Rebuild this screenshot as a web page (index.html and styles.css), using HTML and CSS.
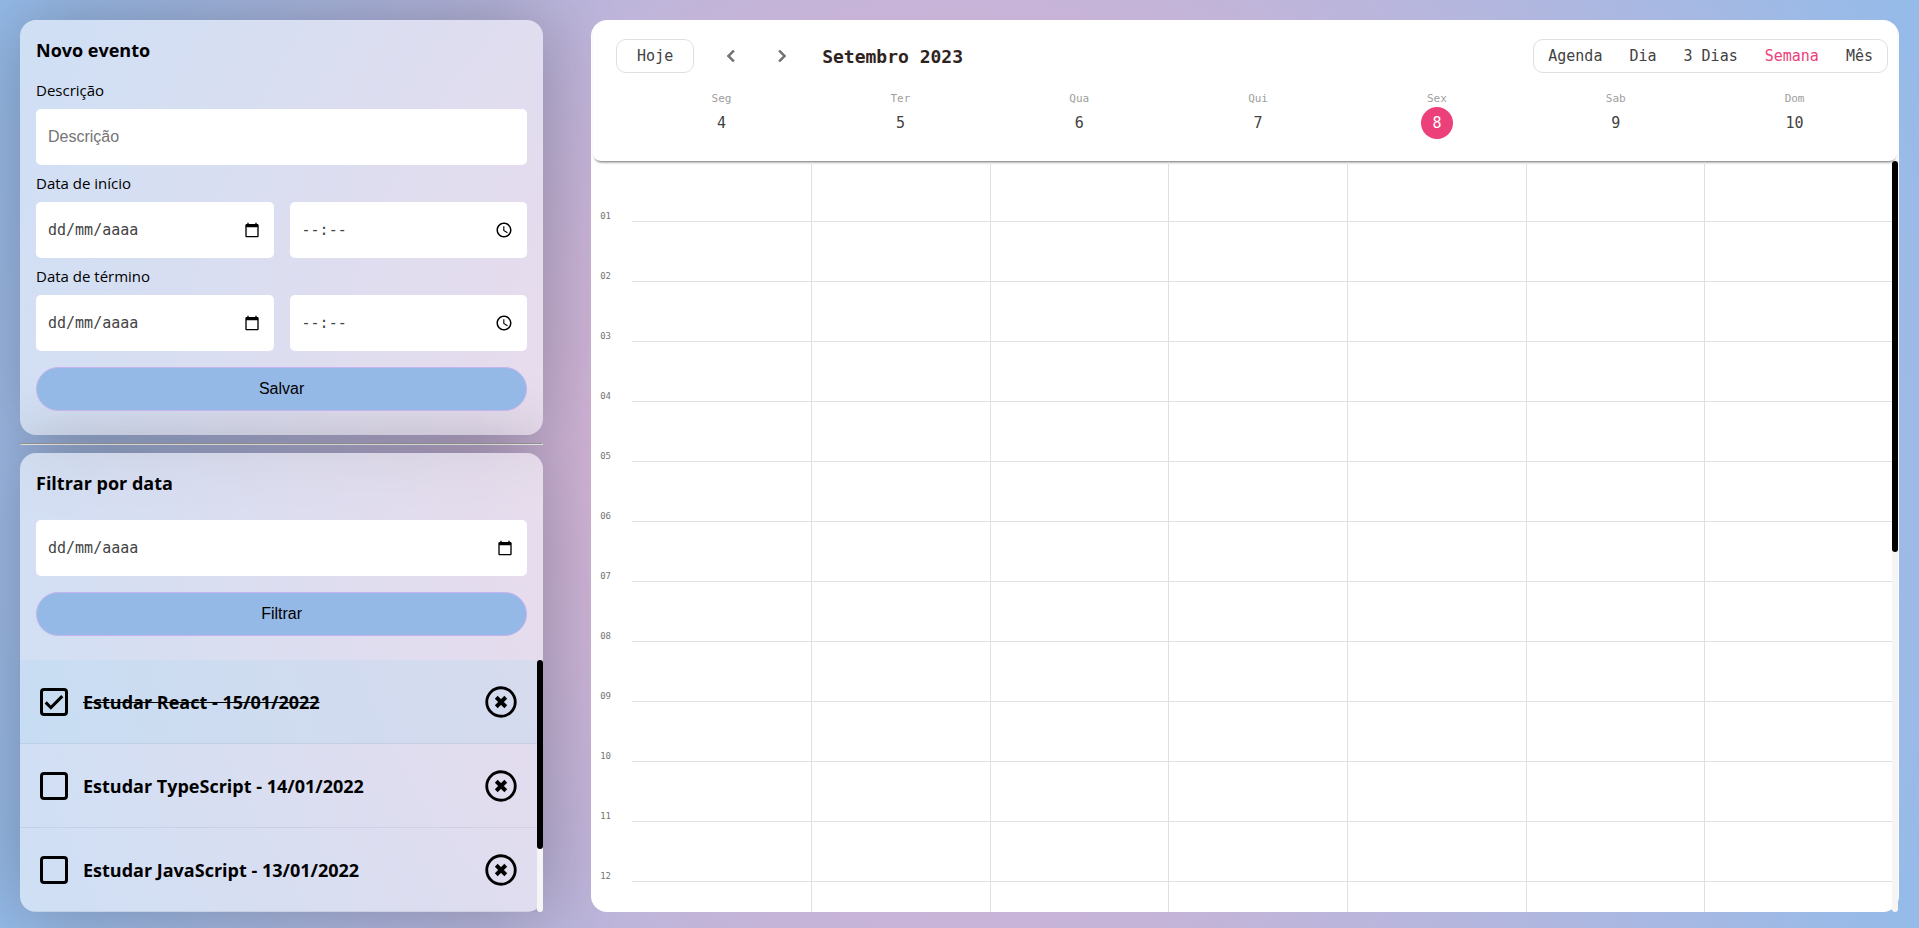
FILE: index.html
```html
<!DOCTYPE html>
<html lang="pt-BR">
<head>
<meta charset="utf-8">
<meta name="viewport" content="width=device-width, initial-scale=1">
<title>Calendário de eventos</title>
<link rel="stylesheet" href="styles.css">
</head>
<body>
<svg class="sprite" aria-hidden="true">
  <symbol id="i-date" viewBox="0 0 24 24"><path d="M20 3h-1V1h-2v2H7V1H5v2H4c-1.100 0-2 .9-2 2v16c0 1.100.9 2 2 2h16c1.100 0 2-.9 2-2V5c0-1.100-.9-2-2-2zm0 18H4V8h16v13z"/></symbol>
  <symbol id="i-time" viewBox="0 0 24 24"><path d="M12 2C6.500 2 2 6.500 2 12s4.500 10 10 10 10-4.500 10-10S17.500 2 12 2zm0 18c-4.400 0-8-3.600-8-8s3.600-8 8-8 8 3.600 8 8-3.600 8-8 8zm.5-13H11v6l5.200 3.200.8-1.300-4.500-2.700V7z"/></symbol>
  <symbol id="i-close" viewBox="0 0 24 24"><circle cx="12" cy="12" r="9" fill="none" stroke="currentColor" stroke-width="1.8"/><path d="M9 9l6 6M15 9l-6 6" stroke="currentColor" stroke-width="2.500"/></symbol>
  <symbol id="i-prev" viewBox="0 0 24 24"><path stroke="currentColor" stroke-width=".7" d="M15.410 7.410 14 6l-6 6 6 6 1.410-1.410L10.830 12z"/></symbol>
  <symbol id="i-next" viewBox="0 0 24 24"><path stroke="currentColor" stroke-width=".7" d="M10 6 8.590 7.410 13.170 12l-4.580 4.590L10 18l6-6z"/></symbol>
</svg>
<div class="layout">
  <aside class="sidebar">
    <section class="panel">
      <form class="form">
        <h3 class="title">Novo evento</h3>
        <label class="label" for="desc">Descrição</label>
        <div class="field"><input id="desc" class="input input-text" type="text" placeholder="Descrição"></div>
        <label class="label" for="start-date">Data de início</label>
        <div class="pair">
          <div class="field"><input id="start-date" class="input" type="text" placeholder="dd/mm/aaaa"><button class="picker" type="button" aria-label="Abrir calendário"><svg><use href="#i-date"/></svg></button></div>
          <div class="field"><input class="input" type="text" placeholder="--:--" aria-label="Hora de início"><button class="picker picker-time" type="button" aria-label="Abrir horário"><svg><use href="#i-time"/></svg></button></div>
        </div>
        <label class="label" for="end-date">Data de término</label>
        <div class="pair">
          <div class="field"><input id="end-date" class="input" type="text" placeholder="dd/mm/aaaa"><button class="picker" type="button" aria-label="Abrir calendário"><svg><use href="#i-date"/></svg></button></div>
          <div class="field"><input class="input" type="text" placeholder="--:--" aria-label="Hora de término"><button class="picker picker-time" type="button" aria-label="Abrir horário"><svg><use href="#i-time"/></svg></button></div>
        </div>
        <button class="submit" type="button">Salvar</button>
      </form>
    </section>
    <hr class="divider">
    <section class="panel events">
      <form class="form form-filter">
        <h3 class="title">Filtrar por data</h3>
        <div class="field"><input class="input" type="text" placeholder="dd/mm/aaaa" aria-label="Filtrar por data"><button class="picker" type="button" aria-label="Abrir calendário"><svg><use href="#i-date"/></svg></button></div>
        <button class="submit" type="button">Filtrar</button>
      </form>
      <div class="scroll">
        <ul class="list">
          <li class="item item-done"><input class="check" id="e1" type="checkbox" checked><label class="name" for="e1">Estudar React - 15/01/2022</label><button class="remove" type="button" aria-label="Remover"><svg><use href="#i-close"/></svg></button></li>
          <li class="item"><input class="check" id="e2" type="checkbox"><label class="name" for="e2">Estudar TypeScript - 14/01/2022</label><button class="remove" type="button" aria-label="Remover"><svg><use href="#i-close"/></svg></button></li>
          <li class="item"><input class="check" id="e3" type="checkbox"><label class="name" for="e3">Estudar JavaScript - 13/01/2022</label><button class="remove" type="button" aria-label="Remover"><svg><use href="#i-close"/></svg></button></li>
        </ul>
        <div class="track"><div class="thumb thumb-list"></div></div>
      </div>
    </section>
  </aside>
  <main class="calendar">
    <header class="head">
      <div class="toolbar">
        <button class="today" type="button">Hoje</button>
        <button class="arrow" type="button" aria-label="Anterior"><svg><use href="#i-prev"/></svg></button>
        <button class="arrow" type="button" aria-label="Próximo"><svg><use href="#i-next"/></svg></button>
        <h2 class="month">Setembro 2023</h2>
        <nav class="views">
          <button class="view" type="button">Agenda</button>
          <button class="view" type="button">Dia</button>
          <button class="view" type="button">3 Dias</button>
          <button class="view view-active" type="button">Semana</button>
          <button class="view" type="button">Mês</button>
        </nav>
      </div>
      <div class="days">
        <div class="day"><span class="weekday">Seg</span><span class="number">4</span></div>
        <div class="day"><span class="weekday">Ter</span><span class="number">5</span></div>
        <div class="day"><span class="weekday">Qua</span><span class="number">6</span></div>
        <div class="day"><span class="weekday">Qui</span><span class="number">7</span></div>
        <div class="day"><span class="weekday">Sex</span><span class="number number-today">8</span></div>
        <div class="day"><span class="weekday">Sab</span><span class="number">9</span></div>
        <div class="day"><span class="weekday">Dom</span><span class="number">10</span></div>
      </div>
    </header>
    <div class="scroll scroll-hours">
      <div class="hours" id="hours"></div>
      <div class="track"><div class="thumb thumb-hours"></div></div>
    </div>
  </main>
</div>
<script src="script.js"></script>
</body>
</html>
```

FILE: styles.css
```css
* { box-sizing: border-box; }

body {
  margin: 0;
  height: 100vh;
  overflow: hidden;
  font-family: "Open Sans", "Noto Sans", sans-serif;
  color: #000;
  background: radial-gradient(circle, #eeaeca 0%, #94bbe9 100%);
}

h2, h3, ul { margin: 0; padding: 0; }
button { cursor: pointer; padding: 0; border: 0; background: none; color: inherit; }
svg { display: block; fill: currentColor; }
.sprite { display: none; }

.layout {
  display: grid;
  grid-template-columns: minmax(0, 2fr) minmax(0, 5fr);
  gap: 48px;
  height: 100vh;
  padding: 20px 20px 16px;
}

.sidebar { display: flex; flex-direction: column; min-height: 0; }

.panel {
  border-radius: 16px;
  background: rgba(255, 255, 255, 0.54);
  box-shadow: 0 0 80px rgba(0, 0, 0, 0.28);
}
.form {
  position: relative;
  z-index: 1;
  display: flex;
  flex-direction: column;
  padding: 16px 16px 24px;
}

.title { margin-bottom: 16px; font-size: 18px; line-height: 28px; font-weight: 700; }
.form-filter .title { margin-bottom: 23px; }
.label { margin-bottom: 8px; font-size: 15px; line-height: 21px; }
.pair { display: grid; grid-template-columns: 1fr 1fr; gap: 16px; }
.field {
  display: flex;
  align-items: center;
  height: 56px;
  padding: 0 14px 0 12px;
  border-radius: 5px;
  background: #fff;
}
.field + .label, .pair + .label { margin-top: 8px; }
.input {
  flex: 1;
  min-width: 0;
  height: 100%;
  padding: 0;
  border: 0;
  outline: 0;
  background: none;
  font: 15px "DejaVu Sans Mono", monospace;
}
.input::placeholder { color: #444; }
.input-text { font: 16px "Liberation Sans", Arial, sans-serif; }
.input-text::placeholder { color: #757575; }
.picker svg { width: 16px; height: 16px; }
.picker-time svg { width: 18px; height: 18px; }

.submit {
  height: 44px;
  margin-top: 16px;
  border: 1px solid #c5b4ee;
  border-radius: 22px;
  background: #95b9e7;
  font: 16px "Liberation Sans", Arial, sans-serif;
}

.divider { width: 100%; margin: 8px 0; border: 1px inset #eee; }

.events { display: flex; flex: 1; flex-direction: column; min-height: 0; }

.scroll { display: flex; flex: 1; min-height: 0; }
.track { flex: none; width: 6px; border-radius: 3px; background: #f5f5f5; }
.thumb { border-radius: 3px; background: #000; }
.thumb-list { height: 75%; }
.thumb-hours { height: 52%; }

.list {
  flex: 1;
  min-width: 0;
  overflow: hidden;
  list-style: none;
  border-bottom-left-radius: 16px;
}
.item {
  display: flex;
  align-items: center;
  height: 84px;
  padding: 0 17px 0 20px;
  border-bottom: 1px solid rgba(0, 0, 40, 0.06);
}
.item-done { background: rgba(173, 216, 240, 0.25); }
.item-done .name { text-decoration: line-through; }
.name { flex: 1; padding: 0 15px; font-size: 18px; font-weight: 700; }
.check {
  appearance: none;
  width: 28px;
  height: 28px;
  margin: 0;
  border: 3px solid #000;
  border-radius: 4px;
}
.check:checked {
  background: no-repeat center / 100% 100% url("data:image/svg+xml,%3Csvg xmlns='http://www.w3.org/2000/svg' viewBox='5 5 14 14'%3E%3Cpath d='M17.990 9l-1.410-1.420-6.590 6.590-2.580-2.570-1.420 1.410 4 3.990z'/%3E%3C/svg%3E");
}
.remove svg { width: 38px; height: 38px; }

.calendar {
  display: flex;
  flex-direction: column;
  min-height: 0;
  border-radius: 16px;
  background: #fff;
  font-family: "DejaVu Sans Mono", monospace;
}
.head {
  height: 141px;
  flex: none;
  margin: 0 2px;
  padding: 19px 9px 0 23px;
  border-radius: 8px;
  box-shadow: 0 3px 3px -2px rgba(0, 0, 0, 0.6);
}
.toolbar { display: flex; align-items: center; height: 34px; }
.today {
  width: 78px;
  height: 34px;
  border: 1px solid #dfdfdf;
  border-radius: 10px;
  font: 15px "DejaVu Sans Mono", monospace;
  color: #424242;
}
.arrow { width: 24px; margin-left: 25px; color: #757575; }
.arrow + .arrow { margin-left: 27px; }
.arrow svg { width: 24px; height: 24px; }
.month { margin-left: 28px; font-size: 18px; font-weight: 700; color: #2f2320; }
.views {
  display: flex;
  align-items: center;
  gap: 27px;
  height: 34px;
  margin-left: auto;
  padding: 0 14px;
  border: 1px solid #dfdfdf;
  border-radius: 10px;
}
.view { font: 15px "DejaVu Sans Mono", monospace; color: #424242; }
.view-active { color: #ec407a; }

.days { display: grid; grid-template-columns: repeat(7, 1fr); margin: 18px 4px 0 16px; }
.day { display: flex; flex-direction: column; align-items: center; }
.weekday { font-size: 11px; line-height: 16px; color: #9e9e9e; }
.number {
  width: 32px;
  height: 32px;
  border-radius: 50%;
  font-size: 15px;
  line-height: 32px;
  text-align: center;
  color: #424242;
}
.number-today { background: #ec407a; color: #fff; }

.scroll-hours { padding-right: 1px; }
.hours { flex: 1; min-width: 0; overflow: hidden; padding-top: 1px; border-bottom-left-radius: 16px; }
.hour { display: flex; height: 60px; }
.hour-label {
  display: flex;
  align-items: flex-end;
  width: 41px;
  padding-left: 9px;
  font-size: 9px;
  line-height: 11px;
  color: #757575;
}
.slots {
  display: grid;
  flex: 1;
  grid-template-columns: repeat(7, 1fr);
  padding-right: 9px;
  border-bottom: 1px solid #e0e0e0;
}
.slot + .slot { border-left: 1px solid #e0e0e0; }
```

FILE: script.js
```js
const hours = document.getElementById("hours");
for (let h = 1; h <= 13; h++) {
  const row = document.createElement("div");
  row.className = "hour";
  const label = document.createElement("span");
  label.className = "hour-label";
  label.textContent = h < 13 ? String(h).padStart(2, "0") : "";
  const slots = document.createElement("div");
  slots.className = "slots";
  for (let d = 0; d < 7; d++) {
    const slot = document.createElement("div");
    slot.className = "slot";
    slots.append(slot);
  }
  row.append(label, slots);
  hours.append(row);
}
```
